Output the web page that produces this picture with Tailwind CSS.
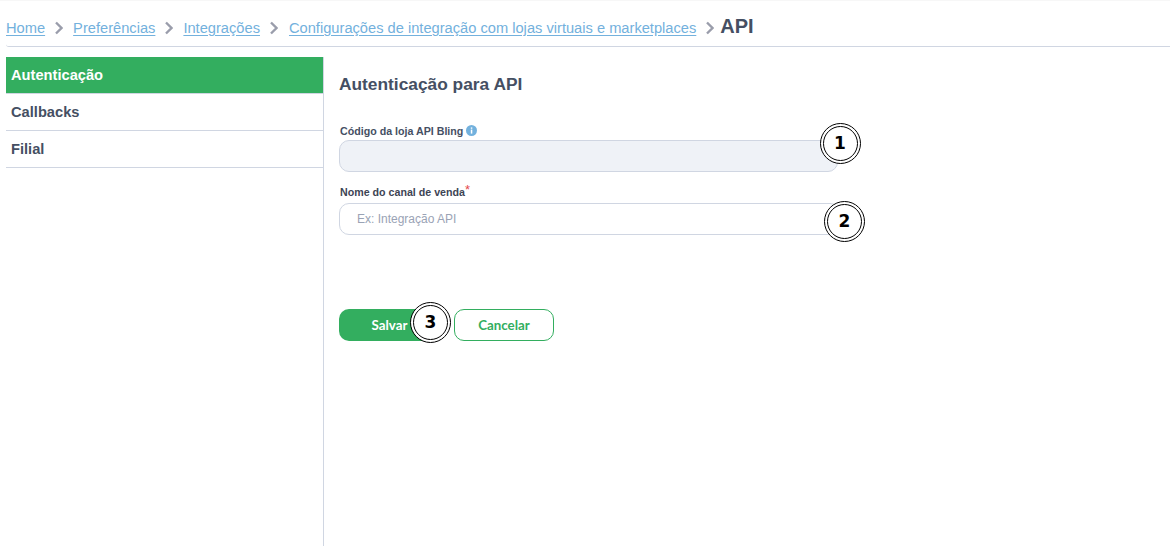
<!DOCTYPE html>
<html lang="en">
  <head>
    <meta charset="UTF-8" />
    <script src="https://cdn.jsdelivr.net/npm/@tailwindcss/browser@4"></script>
    <title>API</title>
  </head>
  <body class="bg-white h-[546px] w-[1170px] overflow-hidden font-['Liberation_Sans',sans-serif] text-[#454f63]">
    <div class="h-px bg-[#f7f7f7]"></div>
    <!-- Breadcrumb -->
    <nav class="ml-[6px] h-[46px] border-b border-[#d0d6e2] rounded-bl-[3px] flex items-center pt-[9px] text-[14.67px] text-[#73b1dd]">
      <a href="#" class="underline underline-offset-[2px]">Home</a>
      <svg class="mx-[10px] w-[8px] h-[14px]" viewBox="0 0 8 14" fill="none" stroke="#9a9dab" stroke-width="2.4"><path d="M1 1.5 6.5 7 1 12.5" /></svg>
      <a href="#" class="underline underline-offset-[2px]">Preferências</a>
      <svg class="mx-[10px] w-[8px] h-[14px]" viewBox="0 0 8 14" fill="none" stroke="#9a9dab" stroke-width="2.4"><path d="M1 1.5 6.5 7 1 12.5" /></svg>
      <a href="#" class="underline underline-offset-[2px]">Integrações</a>
      <svg class="ml-[10px] mr-[11px] w-[8px] h-[14px]" viewBox="0 0 8 14" fill="none" stroke="#9a9dab" stroke-width="2.4"><path d="M1 1.5 6.5 7 1 12.5" /></svg>
      <a href="#" class="underline underline-offset-[2px]">Configurações de integração com lojas virtuais e marketplaces</a>
      <svg class="ml-[10px] mr-[6px] w-[8px] h-[14px]" viewBox="0 0 8 14" fill="none" stroke="#9a9dab" stroke-width="2.4"><path d="M1 1.5 6.5 7 1 12.5" /></svg>
      <span class="text-[20px] font-bold text-[#454f63] -mt-[4px]">API</span>
    </nav>
    <div class="flex h-[499px] pt-[10px]">
      <!-- Sidebar -->
      <aside class="ml-[6px] w-[318px] border-r border-[#d0d6e2] text-[14.67px] font-bold">
        <div class="h-[37px] bg-[#33ae5f] text-white border-b border-[#d0d6e2] pl-[5px] flex items-center">Autenticação</div>
        <div class="h-[37px] border-b border-[#d0d6e2] pl-[5px] flex items-center">Callbacks</div>
        <div class="h-[37px] border-b border-[#d0d6e2] pl-[5px] flex items-center">Filial</div>
      </aside>
      <!-- Form -->
      <main class="pl-[15px] w-[560px] relative">
        <h1 class="text-[17.33px] font-bold mt-[17px] leading-[20px]">Autenticação para API</h1>
        <div class="mt-[30px] h-[13px] flex items-center pl-px text-[10.67px] font-bold text-[#454f63]">
          Código da loja API Bling
          <svg class="ml-[3px] w-[11px] h-[11px]" viewBox="0 0 11 11"><circle cx="5.5" cy="5.5" r="5.5" fill="#73b1dd" /><rect x="4.8" y="4.6" width="1.5" height="4" fill="#fff" /><rect x="4.8" y="2.4" width="1.5" height="1.4" fill="#fff" /></svg>
        </div>
        <div class="mt-[3px] w-[499px] h-[32px] rounded-[10px] border border-[#d0d6e2] bg-[#eff2f7]"></div>
        <div class="mt-[12px] h-[15px] flex items-center pl-px text-[10.67px] font-bold text-[#3d4454]">
          Nome do canal de venda<span class="text-[#e5484d] font-normal text-[13px] -mt-[3px]">*</span>
        </div>
        <input type="text" placeholder="Ex: Integração API" class="mt-[4px] block w-[501px] h-[32px] rounded-[10px] border border-[#d0d6e2] bg-white pl-[17px] text-[12px] placeholder:text-[#9aa3b5] outline-none" />
        <div class="mt-[74px] flex gap-[14px] font-['Lato',sans-serif] text-[13.33px] font-bold">
          <button class="w-[101px] h-[32px] rounded-[10px] bg-[#33ae5f] text-white pt-[2px]">Salvar</button>
          <button class="w-[100px] h-[32px] rounded-[10px] border border-[#33ae5f] bg-white text-[#33ae5f] pt-[2px]">Cancelar</button>
        </div>
        <!-- Numbered markers over the form -->
        <span class="absolute left-[496px] top-[66px] w-[41px] h-[41px] rounded-full border-[4px] border-double border-black bg-white flex items-center justify-center font-['DejaVu_Sans',sans-serif] font-bold text-[17px] text-black pr-px pt-px">1</span>
        <span class="absolute left-[500px] top-[144px] w-[41px] h-[41px] rounded-full border-[4px] border-double border-black bg-white flex items-center justify-center font-['DejaVu_Sans',sans-serif] font-bold text-[17px] text-black pt-px">2</span>
        <span class="absolute left-[86px] top-[245px] w-[41px] h-[41px] rounded-full border-[4px] border-double border-black bg-white flex items-center justify-center font-['DejaVu_Sans',sans-serif] font-bold text-[17px] text-black pt-px">3</span>
      </main>
    </div>
  </body>
</html>
